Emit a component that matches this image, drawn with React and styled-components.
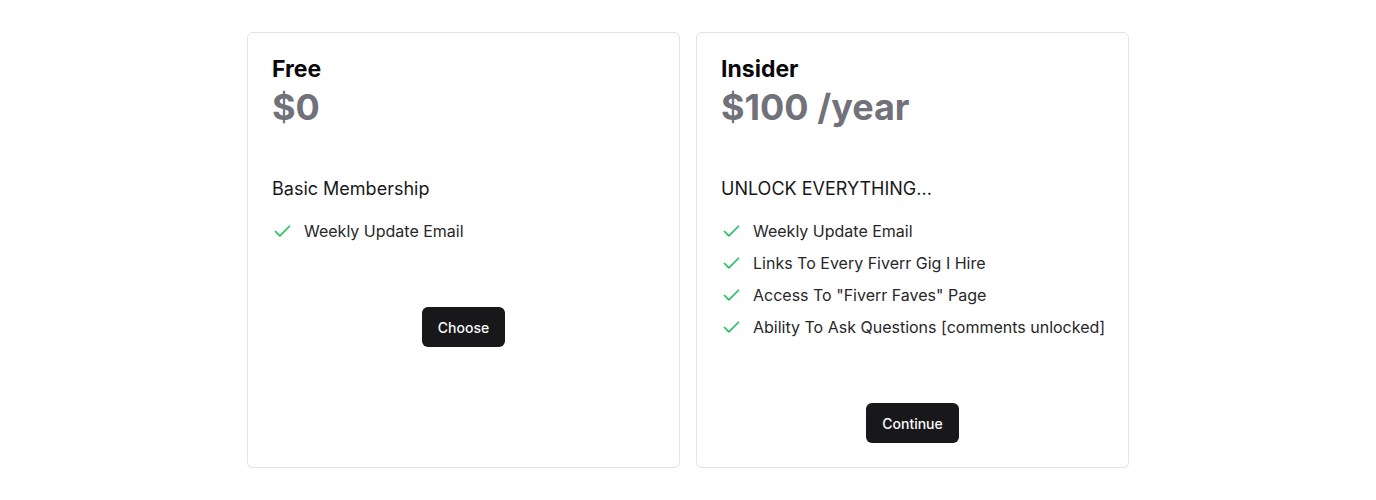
import React from "react";
import styled, { createGlobalStyle } from "styled-components";

const Global = createGlobalStyle`
  html, body { margin: 0; padding: 0; background: #ffffff; }
  body { font-family: Inter, "Noto Sans", sans-serif; color: #09090b; -webkit-font-smoothing: antialiased; }
  * { box-sizing: border-box; }
`;

const Page = styled.main`
  display: flex;
  justify-content: center;
  padding-top: 32px;
`;

const Grid = styled.div`
  display: grid;
  grid-template-columns: 433px 433px;
  gap: 16px;
  align-items: stretch;
`;

const Card = styled.section`
  display: flex;
  flex-direction: column;
  border: 1px solid #e4e4e7;
  border-radius: 6px;
  background: #fff;
  box-shadow: 0 1px 2px rgba(0, 0, 0, 0.04);
  padding: 24px;
`;

const Title = styled.h2`
  margin: 0;
  font-size: 23px;
  line-height: 24px;
  font-weight: 700;
  color: #09090b;
`;

const Price = styled.div`
  margin-top: 6px;
  font-size: 36px;
  line-height: 40px;
  font-weight: 700;
  color: #71717a;
`;

const Subtitle = styled.p`
  margin: 48px 0 0;
  font-size: 18px;
  line-height: 28px;
  color: #18181b;
`;

const List = styled.ul`
  list-style: none;
  margin: 16px 0 0;
  padding: 0;
  display: flex;
  flex-direction: column;
  gap: 8px;
`;

const Item = styled.li`
  display: flex;
  align-items: center;
  gap: 11px;
  font-size: 16px;
  line-height: 24px;
  color: #27272a;
  white-space: nowrap;
`;

const Check = styled.svg`
  width: 21px;
  height: 21px;
  flex-shrink: 0;
  color: #22c55e;
`;

const Footer = styled.div`
  display: flex;
  justify-content: center;
  margin-top: 64px;
`;

const Button = styled.button`
  height: 40px;
  padding: 0 16px;
  border: none;
  border-radius: 6px;
  background: #18181b;
  color: #fafafa;
  font-family: Inter, "Noto Sans", sans-serif;
  font-size: 14px;
  font-weight: 500;
  cursor: pointer;
`;

const CheckIcon = () => (
  <Check viewBox="0 0 24 24" fill="none" stroke="currentColor" strokeWidth="2" strokeLinecap="round" strokeLinejoin="round">
    <path d="M20 6 9 17l-5-5" />
  </Check>
);

const plans = [
  {
    name: "Free",
    price: "$0",
    subtitle: "Basic Membership",
    features: ["Weekly Update Email"],
    cta: "Choose",
  },
  {
    name: "Insider",
    price: "$100 /year",
    subtitle: "UNLOCK EVERYTHING...",
    features: [
      "Weekly Update Email",
      "Links To Every Fiverr Gig I Hire",
      'Access To "Fiverr Faves" Page',
      "Ability To Ask Questions [comments unlocked]",
    ],
    cta: "Continue",
  },
];

export default function App() {
  return (
    <>
      <Global />
      <Page>
        <Grid>
          {plans.map((p) => (
            <Card key={p.name}>
              <Title>{p.name}</Title>
              <Price>{p.price}</Price>
              <Subtitle>{p.subtitle}</Subtitle>
              <List>
                {p.features.map((f) => (
                  <Item key={f}>
                    <CheckIcon />
                    {f}
                  </Item>
                ))}
              </List>
              <Footer>
                <Button>{p.cta}</Button>
              </Footer>
            </Card>
          ))}
        </Grid>
      </Page>
    </>
  );
}
